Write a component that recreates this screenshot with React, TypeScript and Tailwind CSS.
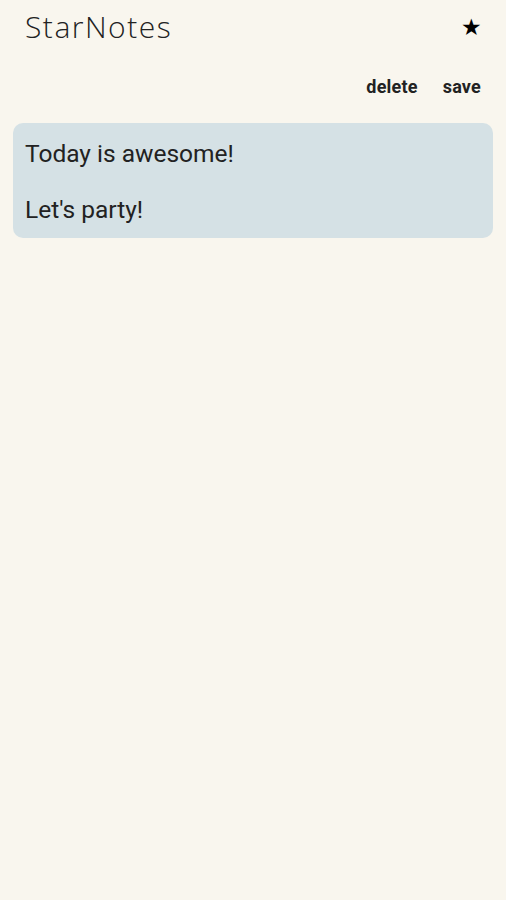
export default function App() {
  return (
    <div className="min-h-[900px] w-full bg-[#f9f6ee] font-['Roboto',sans-serif]">
      <header className="flex items-center justify-between pl-[25px] pr-[24px] pt-[8px]">
        <h1 className="font-['Open_Sans',sans-serif] text-[30px] font-light leading-[38px] tracking-[1.5px] text-[#222]">
          StarNotes
        </h1>
        <span className="text-[23px] leading-none text-black">★</span>
      </header>
      <div className="mt-[31px] flex justify-end gap-[25px] pr-[25px]">
        <button className="text-[18px] font-bold leading-[20px] tracking-[0.2px] text-[#222]">delete</button>
        <button className="text-[18px] font-bold leading-[20px] tracking-[0.2px] text-[#222]">save</button>
      </div>
      <div className="mx-[13px] mt-[26px] rounded-[10px] bg-[#d5e1e5] px-[12px] pb-[14px] pt-[17px] text-[24.5px] leading-[28px] text-[#222]">
        <p>Today is awesome!</p>
        <p>&nbsp;</p>
        <p>Let's party!</p>
      </div>
    </div>
  );
}
